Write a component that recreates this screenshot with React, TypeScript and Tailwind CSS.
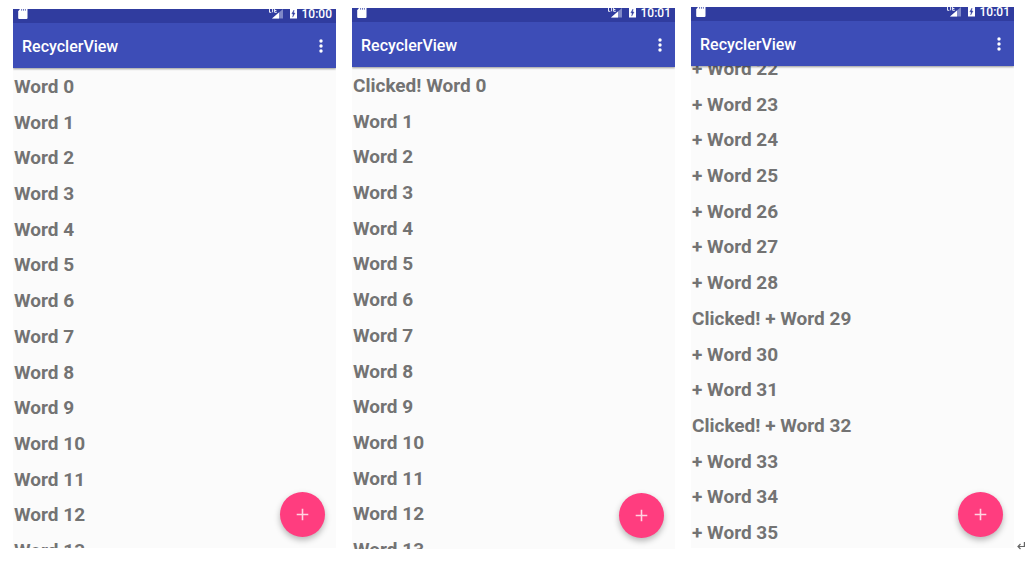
import { useState } from "react";

type PhoneProps = {
  time: string;
  initialWords: string[];
  frame: string;
  listOffset: string;
};

function StatusBar({ time }: { time: string }) {
  return (
    <div className="flex h-3.5 shrink-0 items-start justify-between overflow-hidden bg-[#303c9f] pl-[5px] pr-1 text-white">
      <svg width="10" height="10" viewBox="0 0 10 10" aria-hidden="true">
        <path d="M2 0H9.500v9a1 1 0 0 1-1 1H1.200a1 1 0 0 1-1-1V2.200z" fill="#fff" />
        <path d="M3.600 0v1.700M5.500 0v1.700M7.400 0v1.700" stroke="#5a65b5" strokeWidth="0.900" />
      </svg>
      <div className="flex h-3.5 items-start">
        <svg width="34" height="10" viewBox="0 0 34 10" aria-hidden="true">
          <path d="M16 0v9.500H5z" fill="#7f88c7" />
          <path d="M12 3.500V9.500H5z" fill="#fff" />
          <path d="M2.500 0v3.300h1.800M5.600 0v3.300M7.600 0v3.300h2.200M7.600 1.500h1.800" stroke="#fff" strokeWidth="0.900" fill="none" />
          <path d="M23 0h7v9.500h-7z" fill="#fff" />
          <path d="M27 1l-2.200 3.800h1.400l-.5 3.300 2.300-4h-1.400z" fill="#303c9f" stroke="#303c9f" strokeWidth="0.400" />
        </svg>
        <span className="ml-px text-[12px] leading-[10px] font-medium">{time}</span>
      </div>
    </div>
  );
}

function Phone({ time, initialWords, frame, listOffset }: PhoneProps) {
  const [words, setWords] = useState(initialWords);

  const markClicked = (index: number) =>
    setWords(words.map((word, i) => (i === index ? `Clicked! ${word}` : word)));

  return (
    <section className={`relative flex min-w-0 flex-col overflow-hidden bg-[#fbfbfb] ${frame}`}>
      <div className="relative z-10 shrink-0 shadow-[0_1px_2px_rgba(0,0,0,0.4)]">
        <StatusBar time={time} />
        <header className="flex h-[45px] items-center justify-between bg-[#3d4db7] pr-[7px] pl-[9px] text-white">
          <h1 className="pt-0.5 text-base leading-5 font-medium">RecyclerView</h1>
          <button type="button" aria-label="More options" className="flex h-8 w-4 items-center justify-center">
            <svg width="4" height="14" viewBox="0 0 4 14" fill="currentColor" aria-hidden="true">
              <circle cx="2" cy="2" r="1.700" />
              <circle cx="2" cy="7" r="1.700" />
              <circle cx="2" cy="12" r="1.700" />
            </svg>
          </button>
        </header>
      </div>
      <div className="min-h-0 flex-1 overflow-hidden">
        <ul className={`flex h-[500px] flex-col pl-px ${listOffset}`}>
          {words.map((word, index) => (
            <li key={index} className="flex min-h-0 flex-1">
              <button
                type="button"
                onClick={() => markClicked(index)}
                className="flex-1 text-left text-[19px] leading-6 font-bold text-[#737373]"
              >
                {word}
              </button>
            </li>
          ))}
        </ul>
      </div>
      <button
        type="button"
        aria-label="Add word"
        onClick={() => setWords([...words, `+ Word ${words.length}`])}
        className="absolute right-[11px] bottom-[11px] flex size-[45px] items-center justify-center rounded-full bg-[#ff3d7f] shadow-[0_3px_6px_rgba(0,0,0,0.28)]"
      >
        <svg width="13" height="13" viewBox="0 0 13 13" stroke="#ffd3e1" strokeWidth="1.600" aria-hidden="true">
          <path d="M6.500 0.700v11.600M0.700 6.500h11.600" />
        </svg>
      </button>
    </section>
  );
}

const plainWords = Array.from({ length: 14 }, (_, i) => `Word ${i}`);
const firstClicked = plainWords.map((word, i) => (i === 0 ? `Clicked! ${word}` : word));
const addedWords = Array.from({ length: 14 }, (_, i) => {
  const n = i + 22;
  return n === 29 || n === 32 ? `Clicked! + Word ${n}` : `+ Word ${n}`;
});

export default function App() {
  return (
    <main className="relative grid h-screen grid-cols-3 gap-4 bg-white pr-4 pb-5 pl-[13px] font-['Roboto',sans-serif]">
      <Phone time="10:00" initialWords={plainWords} frame="mt-[9px] mb-px" listOffset="mt-px" />
      <Phone time="10:01" initialWords={firstClicked} frame="mt-2" listOffset="mt-px" />
      <Phone time="10:01" initialWords={addedWords} frame="mt-[7px] mb-px" listOffset="-mt-[15px]" />
      <svg
        className="absolute right-[5px] bottom-[18px]"
        width="8"
        height="10"
        viewBox="0 0 8 10"
        fill="none"
        stroke="#666"
        strokeWidth="1.200"
        aria-hidden="true"
      >
        <path d="M7.400 1v4.500H1M3.500 3L1 5.500 3.500 8" />
      </svg>
    </main>
  );
}
